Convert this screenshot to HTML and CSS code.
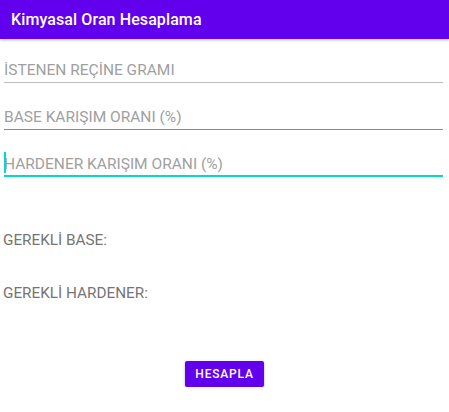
FILE: index.html
```html
<!DOCTYPE html>
<html lang="tr">
<head>
<meta charset="utf-8">
<title>Kimyasal Oran Hesaplama</title>
<link rel="stylesheet" href="styles.css">
</head>
<body>
<header class="toolbar"><span class="title">Kimyasal Oran Hesaplama</span></header>
<main class="content">
  <div class="fields">
    <div class="field"><span class="hint">İSTENEN REÇİNE GRAMI</span></div>
    <div class="field dark"><span class="hint">BASE KARIŞIM ORANI (%)</span></div>
    <div class="field focused"><span class="cursor"></span><span class="hint">HARDENER KARIŞIM ORANI (%)</span></div>
  </div>
  <div class="results">
    <p class="result">GEREKLİ BASE:</p>
    <p class="result">GEREKLİ HARDENER:</p>
  </div>
  <div class="actions">
    <button class="btn" type="button">HESAPLA</button>
  </div>
</main>
</body>
</html>
```
FILE: styles.css
```css
html, body {
  margin: 0;
  padding: 0;
  background: #ffffff;
  font-family: Roboto, "Noto Sans", sans-serif;
}
.toolbar {
  height: 39px;
  background: #6200ee;
  display: flex;
  align-items: center;
  padding-left: 11px;
  box-shadow: 0 1px 3px rgba(0,0,0,0.28);
  position: relative;
  z-index: 1;
}
.title {
  color: #ffffff;
  font-size: 16px;
  font-weight: 500;
  letter-spacing: 0.1px;
}
.content {
  display: flex;
  flex-direction: column;
}
.fields {
  display: flex;
  flex-direction: column;
  gap: 3px;
  padding: 0 6px 0 4px;
}
.field {
  height: 44px;
  box-sizing: border-box;
  border-bottom: 1px solid #bdbdbd;
  display: flex;
  align-items: flex-end;
  padding-bottom: 2px;
}
.field.dark {
  border-bottom-color: #8a8a8a;
}
.field.focused {
  border-bottom: 2px solid #03dac5;
  padding-bottom: 1px;
  position: relative;
}
.hint {
  color: #a0a0a0;
  font-size: 15.5px;
  line-height: 19px;
}
.cursor {
  position: absolute;
  left: 0;
  bottom: 2px;
  width: 2px;
  height: 21px;
  background: #03dac5;
}
.results {
  display: flex;
  flex-direction: column;
  padding-left: 3px;
  padding-top: 53px;
  gap: 33px;
}
.result {
  margin: 0;
  color: #757575;
  font-size: 15.3px;
  line-height: 20px;
}
.actions {
  display: flex;
  justify-content: center;
  padding-top: 58px;
}
.btn {
  width: 79px;
  height: 26px;
  border: none;
  border-radius: 2px;
  background: #6200ee;
  color: #ffffff;
  font-family: Roboto, "Noto Sans", sans-serif;
  font-size: 12px;
  font-weight: 500;
  letter-spacing: 0.8px;
  box-shadow: 0 1px 3px rgba(0,0,0,0.3);
  padding: 0;
}
```
